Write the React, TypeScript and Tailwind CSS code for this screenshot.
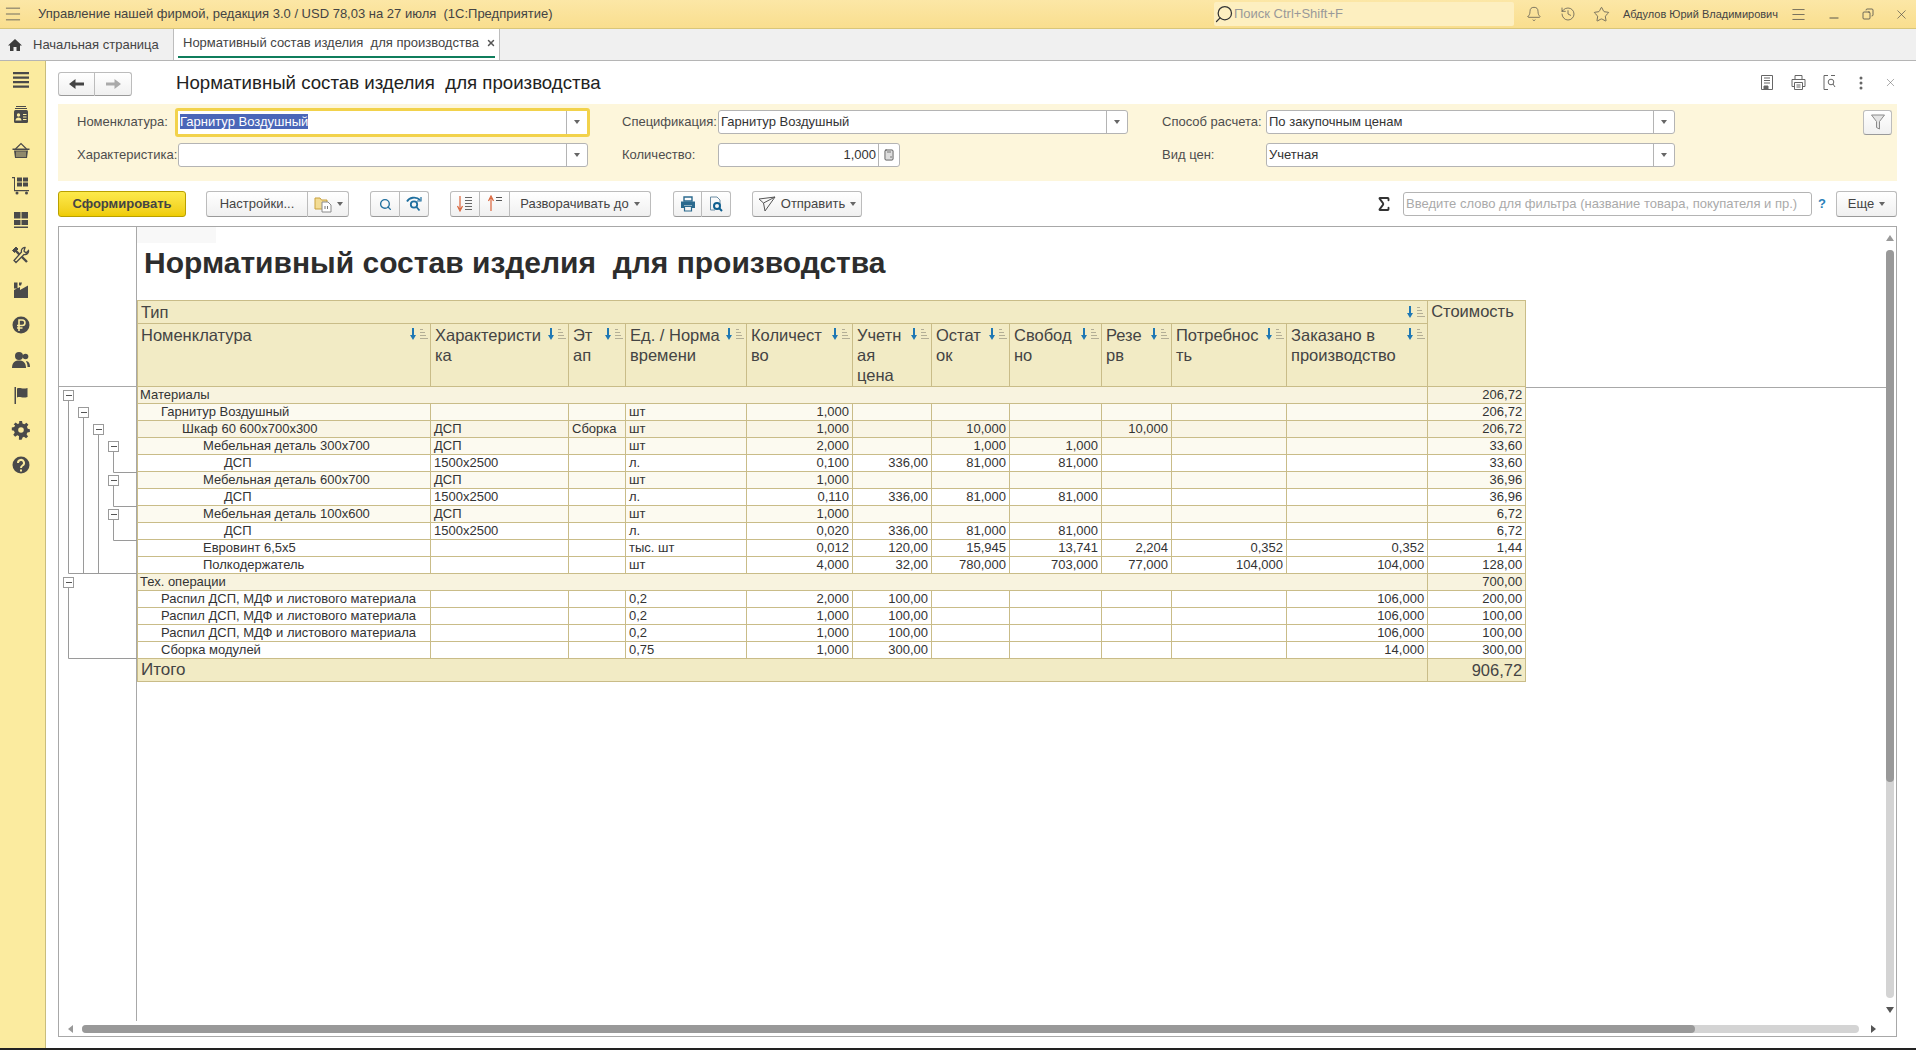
import React from "react";
import { Menu, X, Bell, History, Star, Search, Minus, Copy, Calculator, Sigma } from "lucide-react";

const FONT = "font-['Liberation_Sans',Arial,sans-serif]";
const DARK = "#4a4a4a";

const Caret = () => (
  <svg width="6" height="4" viewBox="0 0 6 4"><path d="M0 0h6L3 4z" fill="#666" /></svg>
);

const SortIcon = () => (
  <svg width="18" height="12" viewBox="0 0 18 12" className="shrink-0">
    <path d="M2 0h2v7h2l-3 5-3-5h2z" fill="#1f78b4" />
    <path d="M10 1.500h3M10 4.500h5M10 7.500h6M10 10.500h8" stroke="#b3ae96" strokeWidth="1" />
  </svg>
);

const SortDown = () => (
  <svg width="18" height="18" viewBox="0 0 18 18">
    <path d="M4 1v13M1.500 11 4 16l2.500-5" stroke="#d9633a" strokeWidth="1.200" fill="none" />
    <path d="M9 2.500h7M9 5.500h7M9 8.500h7M9 11.500h7M9 14.500h7" stroke="#666" strokeWidth="1" />
  </svg>
);

const SortUp = () => (
  <svg width="18" height="18" viewBox="0 0 18 18">
    <path d="M5 16V3M2.500 6 5 1l2.500 5" stroke="#d9633a" strokeWidth="1.200" fill="none" />
    <path d="M10 2.500h6M10 5.500h6" stroke="#555" strokeWidth="1" />
  </svg>
);

const FolderDoc = () => (
  <svg width="18" height="18" viewBox="0 0 18 18">
    <path d="M1 3h5l1.500 2H13v9H1z" fill="#f3dc94" stroke="#c9a13c" />
    <path d="M8 7h6l3 3v7H8z" fill="#fff" stroke="#8a8a8a" />
    <path d="M11 14v-3M13.500 14v-3" stroke="#777" />
  </svg>
);

const Refind = () => (
  <svg width="16" height="16" viewBox="0 0 16 16" fill="none" stroke="#1f6f9f" strokeWidth="1.800">
    <path d="M1 5.500C3 1.500 10 0 14 4" />
    <path d="M15 1v4h-4" strokeWidth="1.200" />
    <circle cx="8" cy="8.500" r="3.200" />
    <path d="m10.500 11 3 3.500" />
  </svg>
);

const PrintFilled = () => (
  <svg width="16" height="16" viewBox="0 0 16 16">
    <path d="M4 1h8v4H4z" fill="none" stroke="#2b6a8e" strokeWidth="1.400" />
    <path d="M1 5.500h14V12h-3V9.500H4V12H1z" fill="#2b6a8e" />
    <path d="M4.500 10.500h7V15h-7z" fill="none" stroke="#2b6a8e" strokeWidth="1.200" />
  </svg>
);

const DocSearch = () => (
  <svg width="16" height="16" viewBox="0 0 16 16">
    <path d="M2.500 1H9l3 3v5M2.500 1v13H7" fill="none" stroke="#6a8ca3" />
    <circle cx="9" cy="10" r="3" fill="none" stroke="#0f5f8f" strokeWidth="2" />
    <path d="m11 12 3 3" stroke="#0f5f8f" strokeWidth="2" />
  </svg>
);

const SendIcon = () => (
  <svg width="18" height="16" viewBox="0 0 18 16" fill="none" stroke="#555">
    <path d="M1 3 17 1 7 15 5.500 7z" />
    <path d="M5.500 7 17 1" />
  </svg>
);

const SaveIcon = () => (
  <svg width="16" height="17" viewBox="0 0 16 17" fill="none" stroke="#666">
    <path d="M2.500 1.500h11v14h-11z" />
    <path d="M5 4h6M5 6.500h6M5 9h6" />
    <path d="M5 12h4v3.500H5z" fill="#666" />
  </svg>
);

const PrintOutline = () => (
  <svg width="17" height="17" viewBox="0 0 17 17" fill="none" stroke="#666">
    <path d="M5 5V1.500h7V5M2 12.500V5.500h13v7h-2.500M4.500 12.500H2" />
    <path d="M4.500 8.500h8v7h-8zM6.500 11h4M6.500 13h4" />
  </svg>
);

const PreviewIcon = () => (
  <svg width="16" height="17" viewBox="0 0 16 17" fill="none" stroke="#666">
    <path d="M6 1.500H2v14h4M9 1.500h4" />
    <circle cx="9" cy="8" r="2.800" />
    <path d="m11 10 2 3" />
  </svg>
);

const Dots = () => (
  <svg width="16" height="16" viewBox="0 0 16 16" fill="#666">
    <circle cx="8" cy="3" r="1.500" /><circle cx="8" cy="8" r="1.500" /><circle cx="8" cy="13" r="1.500" />
  </svg>
);

const HomeIcon = () => (
  <svg width="14" height="14" viewBox="0 0 14 14" fill="#3d3d3d"><path d="M7 1 0 7.500h2V13h3.500V9h3v4H12V7.500h2z" /></svg>
);

const ArrowL = ({ c }: { c: string }) => (
  <svg width="16" height="12" viewBox="0 0 16 12" fill={c}><path d="M0 6 6.500 1v3.500H15v3H6.500V11z" /></svg>
);

const ArrowR = ({ c }: { c: string }) => (
  <svg width="16" height="12" viewBox="0 0 16 12" fill={c}><path d="M16 6 9.500 1v3.500H1v3h8.500V11z" /></svg>
);

const FunnelIcon = () => (
  <svg width="14" height="16" viewBox="0 0 14 16" fill="#e4e4e4" stroke="#8a8a8a"><path d="M.5 1h13L8.500 7.500V15l-3-1.500V7.500z" /></svg>
);

// sidebar section icons, all drawn solid in one colour
const sideIcons: React.ReactNode[] = [
  <g key="m"><path d="M2 2h16v2.200H2zM2 6.500h16v2.200H2zM2 11h16v2.200H2zM2 15.500h16v2.200H2z" /></g>,
  <g key="c">
    <path d="M5 1h10v1H5zM4 3h12v1H4z" />
    <rect x="3" y="5" width="14" height="13" rx="1.500" />
    <circle cx="7.500" cy="10" r="1.700" fill="#fbeb9f" />
    <path d="M4.500 15.500c0-4 6-4 6 0zM12 9h3.500v1H12zM12 11.500h3.500v1H12zM12 14h3.500v1H12z" fill="#fbeb9f" />
  </g>,
  <g key="b">
    <path d="M4.500 9 10 3.500 15.500 9" fill="none" stroke={DARK} strokeWidth="1.200" />
    <path d="M1.500 8.500h17V10h-17zM3 10.500h14l-1 7.500H4z" />
    <path d="M6 11.500V17M8 11.500V17M10 11.500V17M12 11.500V17M14 11.500V17" stroke="#fbeb9f" strokeWidth=".8" />
  </g>,
  <g key="k">
    <path d="M1 2h3v13h14v1.200H3V3.200H1z" />
    <path d="M6 2.500h5v4H6zM12 2.500h5v4h-5zM6 7.500h5v4H6zM12 7.500h5v4h-5z" />
    <circle cx="6" cy="18" r="1.500" /><circle cx="15.500" cy="18" r="1.500" />
  </g>,
  <g key="g"><path d="M3 2h6.500v6.500H3zM10.500 2H17v6.500h-6.500zM3 10h6.500v5H3zM10.500 10H17v5h-6.500zM3 16.500h14V18H3z" /></g>,
  <g key="t" fill="none" stroke={DARK}>
    <path d="m4 5 12 12" strokeWidth="2.400" />
    <path d="M1.500 5.500 5 2l2 2-3.500 3.500z" fill={DARK} strokeWidth="1" />
    <path d="M14 2.500a3.500 3.500 0 0 0-3.500 4.500L3 15.500 5 17.500l8-8a3.500 3.500 0 0 0 4.500-4L15 8l-2-2z" fill="#fbeb9f" strokeWidth="1.300" />
  </g>,
  <g key="f"><path d="M3 2.500h3.500v6H3zM8 2.500h3l-1 3H8zM3 18v-8l6-3v3l8-4.500V18z" /></g>,
  <g key="r">
    <circle cx="10" cy="10" r="8.500" />
    <path d="M8 16V5h3.200a2.700 2.700 0 0 1 0 5.500H6M6 13h5.500" fill="none" stroke="#fbeb9f" strokeWidth="1.600" />
  </g>,
  <g key="u">
    <circle cx="8" cy="6" r="4" /><path d="M1 18c0-6 3.500-7.500 7-7.500s7 1.500 7 7.500z" />
    <circle cx="14.500" cy="6.500" r="2.800" /><path d="M15.500 11c2.500.5 3.500 2.500 3.500 6h-2.500c0-2.500-.5-4.500-1.500-5.500z" />
  </g>,
  <g key="l"><path d="M3.500 2H5v17H3.500zM6 3.500c3-1.500 5 1 10.500-.5v9c-5.500 1.500-7.500-1-10.500.5z" /></g>,
  <g key="s">
    <path d="M8.500 1.500h3l.5 2.700 2 .9 2.300-1.600 2.100 2.100-1.600 2.300.9 2 2.300.6v3l-2.700.5-.9 2 1.600 2.300-2.100 2.100-2.300-1.600-2 .9-.5 2.300h-3" transform="scale(.92) translate(.5 -.5)" />
    <path d="M11.500 18.500h-3l-.5-2.700-2-.9-2.300 1.600-2.100-2.100 1.600-2.300-.9-2-2.300-.5v-3l2.700-.5.9-2L2 3.300l2.100-2.100 2.300 1.600 2-.9.5-2.300" transform="translate(.8 1.500) scale(.92)" />
    <circle cx="10" cy="10" r="6" /><circle cx="10" cy="10" r="2.800" fill="#fbeb9f" />
  </g>,
  <g key="q">
    <circle cx="10" cy="10" r="8.500" />
    <path d="M7 8a3 3 0 1 1 4.500 2.500c-1 .6-1.500 1-1.500 2.500" fill="none" stroke="#fbeb9f" strokeWidth="2" />
    <path d="M9 14.500h2v2H9z" fill="#fbeb9f" />
  </g>,
];

const Field = ({ value, w, focus, right, calc, selected }: { value?: string; w: string; focus?: boolean; right?: boolean; calc?: boolean; selected?: boolean }) => (
  <div className={`${w} ${focus ? "h-[29px] border-[3px] border-[#f2d24b]" : "h-[24px] border border-[#b4b4b4]"} flex items-center rounded-[3px] bg-white text-[13px] text-[#333]`}>
    <span className={`flex-1 px-[2px] truncate ${right ? "text-right" : ""}`}>
      {selected ? <span className="bg-[#4a66b8] text-white">{value}</span> : value}
    </span>
    <span className="h-full w-[21px] border-l border-[#b4b4b4] flex items-center justify-center text-[#555]">
      {calc ? <Calculator size={12} /> : <Caret />}
    </span>
  </div>
);

const Label = ({ children }: { children: React.ReactNode }) => (
  <div className="text-[13px] text-[#4d4d4d] whitespace-nowrap">{children}</div>
);

const Btn = ({ children, w, first, last }: { children: React.ReactNode; w: string; first?: boolean; last?: boolean }) => (
  <div className={`${w} h-[26px] flex items-center justify-center gap-[5px] border border-[#bcbcbc] border-b-[#9a9a9a] bg-gradient-to-b from-white to-[#f0f0f0] text-[13px] text-[#444] whitespace-nowrap ${first === false ? "border-l-0" : "rounded-l-[3px]"} ${last === false ? "" : "rounded-r-[3px]"}`}>
    {children}
  </div>
);

type Row = { kind: "g" | "s" | "l" | "w"; name: string; ind: number; c: string[] };

const rows: Row[] = [
  { kind: "g", name: "Материалы", ind: 0, c: [] },
  { kind: "l", name: "Гарнитур Воздушный", ind: 1, c: ["", "", "шт", "1,000", "", "", "", "", "", "", "206,72"] },
  { kind: "s", name: "Шкаф 60 600х700х300", ind: 2, c: ["ДСП", "Сборка", "шт", "1,000", "", "10,000", "", "10,000", "", "", "206,72"] },
  { kind: "l", name: "Мебельная деталь 300х700", ind: 3, c: ["ДСП", "", "шт", "2,000", "", "1,000", "1,000", "", "", "", "33,60"] },
  { kind: "w", name: "ДСП", ind: 4, c: ["1500х2500", "", "л.", "0,100", "336,00", "81,000", "81,000", "", "", "", "33,60"] },
  { kind: "l", name: "Мебельная деталь 600х700", ind: 3, c: ["ДСП", "", "шт", "1,000", "", "", "", "", "", "", "36,96"] },
  { kind: "w", name: "ДСП", ind: 4, c: ["1500х2500", "", "л.", "0,110", "336,00", "81,000", "81,000", "", "", "", "36,96"] },
  { kind: "l", name: "Мебельная деталь 100х600", ind: 3, c: ["ДСП", "", "шт", "1,000", "", "", "", "", "", "", "6,72"] },
  { kind: "w", name: "ДСП", ind: 4, c: ["1500х2500", "", "л.", "0,020", "336,00", "81,000", "81,000", "", "", "", "6,72"] },
  { kind: "w", name: "Евровинт 6,5х5", ind: 3, c: ["", "", "тыс. шт", "0,012", "120,00", "15,945", "13,741", "2,204", "0,352", "0,352", "1,44"] },
  { kind: "w", name: "Полкодержатель", ind: 3, c: ["", "", "шт", "4,000", "32,00", "780,000", "703,000", "77,000", "104,000", "104,000", "128,00"] },
  { kind: "g", name: "Тех. операции", ind: 0, c: [] },
  { kind: "w", name: "Распил ДСП, МДФ и листового материала", ind: 1, c: ["", "", "0,2", "2,000", "100,00", "", "", "", "", "106,000", "200,00"] },
  { kind: "w", name: "Распил ДСП, МДФ и листового материала", ind: 1, c: ["", "", "0,2", "1,000", "100,00", "", "", "", "", "106,000", "100,00"] },
  { kind: "w", name: "Распил ДСП, МДФ и листового материала", ind: 1, c: ["", "", "0,2", "1,000", "100,00", "", "", "", "", "106,000", "100,00"] },
  { kind: "w", name: "Сборка модулей", ind: 1, c: ["", "", "0,75", "1,000", "300,00", "", "", "", "", "14,000", "300,00"] },
];

const groupTotals: Record<string, string> = { "Материалы": "206,72", "Тех. операции": "700,00" };

const indents = ["pl-[2px]", "pl-[23px]", "pl-[44px]", "pl-[65px]", "pl-[86px]"];
const bgs = { g: "bg-[#f8f3df]", s: "bg-[#f9f5e5]", l: "bg-[#fcfaf0]", w: "bg-white" };
const cols = [293, 138, 57, 121, 106, 79, 78, 92, 70, 115, 141, 98];
const heads: [string, string?, string?][] = [
  ["Номенклатура"], ["Характеристи", "ка"], ["Эт", "ап"], ["Ед. / Норма", "времени"], ["Количест", "во"], ["Учетн", "ая", "цена"], ["Остат", "ок"], ["Свобод", "но"], ["Резе", "рв"], ["Потребнос", "ть"], ["Заказано в", "производство"],
];

const cell = "border border-[#c9bc88]";

// tree outline in the left gutter
const Outline = () => {
  const top = 387;
  const ry = (n: number) => top + n * 17 + 8.500;
  const boxes = [[68, 0], [83, 1], [98, 2], [113, 3], [113, 5], [113, 7], [68, 11]];
  return (
    <svg width="78" height="272" viewBox={`59 ${top} 78 272`} className="block">
      <g stroke="#9a9a9a" fill="none">
        <path d={`M68.500 ${ry(0)}V573.500H137`} />
        <path d={`M83.500 ${ry(1)}V573`} />
        <path d={`M98.500 ${ry(2)}V573`} />
        <path d={`M113.500 ${ry(3)}V472.500H137`} />
        <path d={`M113.500 ${ry(5)}V506.500H137`} />
        <path d={`M113.500 ${ry(7)}V540.500H137`} />
        <path d={`M68.500 ${ry(11)}V658.500H137`} />
      </g>
      {boxes.map(([x, n]) => (
        <g key={`${x}-${n}`}>
          <rect x={x - 4.500} y={ry(n) - 5} width="10" height="10" fill="#fff" stroke="#9a9a9a" />
          <path d={`M${x - 2} ${ry(n)}h6`} stroke="#555" />
        </g>
      ))}
    </svg>
  );
};

export default function App() {
  return (
    <div className={`${FONT} w-[1916px] h-[1050px] overflow-hidden flex flex-col bg-white text-[#333]`}>
      {/* top bar */}
      <div className="h-[29px] shrink-0 flex items-center bg-gradient-to-b from-[#fce7a6] to-[#f9de8e] border-b border-[#d8c67a] text-[13px] text-[#444]">
        <Menu size={20} strokeWidth={1} className="ml-[3px] mr-[15px] text-[#555]" />
        <span className="whitespace-pre">Управление нашей фирмой, редакция 3.0 / USD 78,03 на 27 июля  (1С:Предприятие)</span>
        <div className="ml-auto w-[300px] h-[24px] bg-[#fdefc0] rounded-[2px] flex items-center text-[#999]">
          <Search size={20} strokeWidth={1.500} className="text-[#333] -scale-x-100" />
          <span>Поиск Ctrl+Shift+F</span>
        </div>
        <Bell size={16} strokeWidth={1} className="ml-[12px]" />
        <History size={16} strokeWidth={1} className="ml-[18px]" />
        <Star size={17} strokeWidth={1} className="ml-[17px]" />
        <span className="ml-[13px] text-[11px] whitespace-nowrap">Абдулов Юрий Владимирович</span>
        <Menu size={17} strokeWidth={1} className="ml-[12px]" />
        <Minus size={14} strokeWidth={1.500} className="ml-[20px] mt-[8px]" />
        <Copy size={12} strokeWidth={1.500} className="ml-[21px] -scale-x-100" />
        <X size={15} strokeWidth={1} className="ml-[20px] mr-[7px]" />
      </div>

      {/* tabs */}
      <div className="h-[32px] shrink-0 flex bg-[#f0f0f0] border-b border-[#b5b5b5] text-[13px] text-[#444]">
        <div className="w-[173px] flex items-center">
          <span className="ml-[8px] mr-[11px]"><HomeIcon /></span>
          <span>Начальная страница</span>
        </div>
        <div className="w-[327px] bg-white border-x border-[#bdbdbd] flex flex-col">
          <div className="flex-1 flex items-center pl-[9px]">
            <span className="whitespace-pre">Нормативный состав изделия  для производства</span>
            <X size={10} strokeWidth={3.500} className="ml-[7px] text-[#555]" />
          </div>
          <div className="h-[2px] bg-[#0f7d5c] mx-[4px] mb-[2px]" />
        </div>
      </div>

      <div className="flex-1 min-h-0 flex">
        {/* sidebar */}
        <div className="w-[46px] shrink-0 bg-[#fbeb9f] border-r border-[#c9bd7d] flex flex-col items-center pt-[9px] gap-[15px] pr-[4px]">
          {sideIcons.map((icon, i) => (
            <svg key={i} width="20" height="20" viewBox="0 0 20 20" fill={DARK}>{icon}</svg>
          ))}
        </div>

        {/* main */}
        <div className="flex-1 min-w-0 flex flex-col pl-[12px] pr-[19px]">
          {/* title row */}
          <div className="h-[43px] shrink-0 flex items-center">
            <div className="flex mt-[2px]">
              <div className="w-[37px] h-[24px] flex items-center justify-center border border-[#bcbcbc] border-b-[#9a9a9a] rounded-l-[3px] bg-gradient-to-b from-white to-[#f0f0f0]"><ArrowL c="#444" /></div>
              <div className="w-[37px] h-[24px] flex items-center justify-center border border-l-0 border-[#bcbcbc] border-b-[#9a9a9a] rounded-r-[3px] bg-gradient-to-b from-white to-[#f0f0f0]"><ArrowR c="#aaa" /></div>
            </div>
            <h1 className="ml-[44px] text-[18.670px] text-[#222] whitespace-pre font-normal">Нормативный состав изделия  для производства</h1>
            <div className="ml-auto flex items-center gap-[15px]">
              <SaveIcon />
              <PrintOutline />
              <PreviewIcon />
              <Dots />
              <X size={13} strokeWidth={1} className="text-[#666]" />
            </div>
          </div>

          {/* filter panel */}
          <div className="h-[77px] shrink-0 bg-[#fdf6db] pl-[19px] pt-[2px] grid grid-cols-[98px_415px_32px_96px_410px_34px_104px_409px_188px_29px] grid-rows-[32px_34px] items-center">
            <Label>Номенклатура:</Label>
            <Field value="Гарнитур Воздушный" w="w-[415px]" focus selected />
            <div />
            <Label>Спецификация:</Label>
            <Field value="Гарнитур Воздушный" w="w-[410px]" />
            <div />
            <Label>Способ расчета:</Label>
            <Field value="По закупочным ценам" w="w-[409px]" />
            <div />
            <div className="w-[29px] h-[25px] flex items-center justify-center border border-[#bcbcbc] border-b-[#9a9a9a] rounded-[3px] bg-gradient-to-b from-white to-[#f0f0f0]"><FunnelIcon /></div>
            <Label>Характеристика:</Label>
            <Field w="w-[410px] ml-[3px]" />
            <div />
            <Label>Количество:</Label>
            <Field value="1,000" w="w-[182px]" right calc />
            <div />
            <Label>Вид цен:</Label>
            <Field value="Учетная" w="w-[409px]" />
          </div>

          {/* toolbar */}
          <div className="h-[45px] shrink-0 flex items-center pt-[1px]">
            <div className="w-[128px] h-[26px] flex items-center justify-center rounded-[3px] border border-[#b9a000] bg-gradient-to-b from-[#fdea4a] to-[#efcc00] text-[13px] font-bold text-[#444]">Сформировать</div>
            <div className="ml-[20px] flex">
              <Btn w="w-[102px]" last={false}>Настройки...</Btn>
              <Btn w="w-[41px]" first={false}><FolderDoc /><Caret /></Btn>
            </div>
            <div className="ml-[21px] flex">
              <Btn w="w-[30px]" last={false}><Search size={13} strokeWidth={2.500} className="text-[#1f6f9f]" /></Btn>
              <Btn w="w-[29px]" first={false}><Refind /></Btn>
            </div>
            <div className="ml-[21px] flex">
              <Btn w="w-[30px]" last={false}><SortDown /></Btn>
              <Btn w="w-[30px]" first={false} last={false}><SortUp /></Btn>
              <Btn w="w-[141px]" first={false}>Разворачивать до <Caret /></Btn>
            </div>
            <div className="ml-[22px] flex">
              <Btn w="w-[29px]" last={false}><PrintFilled /></Btn>
              <Btn w="w-[29px]" first={false}><DocSearch /></Btn>
            </div>
            <div className="ml-[21px] flex">
              <Btn w="w-[110px]"><SendIcon /> Отправить <Caret /></Btn>
            </div>
            <Sigma size={18} strokeWidth={2.500} className="ml-auto text-[#333]" />
            <div className="ml-[10px] w-[409px] h-[24px] border border-[#b4b4b4] rounded-[3px] flex items-center px-[2px] text-[13px] text-[#aaa] whitespace-nowrap overflow-hidden">Введите слово для фильтра (название товара, покупателя и пр.)</div>
            <span className="ml-[6px] text-[13px] font-bold text-[#2b7fb8]">?</span>
            <div className="ml-[10px]"><Btn w="w-[61px]">Еще <Caret /></Btn></div>
          </div>

          {/* report */}
          <div className="relative h-[811px] shrink-0 border border-[#a8a8a8] flex overflow-hidden">
            <div className="w-[78px] h-[794px] shrink-0 border-r border-[#a8a8a8] flex flex-col">
              <div className="h-[160px] shrink-0 border-b border-[#a8a8a8]" />
              <Outline />
            </div>
            <div className="flex-1 min-w-0">
              <div className="h-[16px] w-[79px] bg-[#f8f8f8]" />
              <div className="h-[57px] flex items-start pl-[7px] text-[30px] leading-[32px] font-bold text-[#2d2d2d] whitespace-pre pt-[4px]">Нормативный состав изделия  для производства</div>
              <table className="table-fixed border-collapse w-[1388px]">
                <colgroup>
                  {cols.map((w, i) => <col key={i} style={{ width: w }} />)}
                </colgroup>
                <tbody>
                  <tr className="h-[23px] bg-[#f2ebc5] text-[16.500px] leading-[17px] text-[#444]">
                    <td colSpan={11} className={`${cell} px-[3px]`}>
                      <div className="flex justify-between items-center"><span>Тип</span><div className="-mr-[1px]"><SortIcon /></div></div>
                    </td>
                    <td rowSpan={2} className={`${cell} align-top px-[3px] pt-[2px] whitespace-nowrap`}>Стоимость</td>
                  </tr>
                  <tr className="h-[63px] bg-[#f2ebc5] text-[16.500px] leading-[20px] text-[#444]">
                    {heads.map((h, i) => (
                      <td key={i} className={`${cell} align-top ${i === 0 ? "pl-[3px]" : "pl-[4px]"} pr-[2px] pt-[1px]`}>
                        <div className="flex justify-between">
                          <div className="whitespace-nowrap">{h[0]}{h[1] && <br />}{h[1]}{h[2] && <br />}{h[2]}</div>
                          <div className="mt-[3px]"><SortIcon /></div>
                        </div>
                      </td>
                    ))}
                  </tr>
                  {rows.map((r, i) =>
                    r.kind === "g" ? (
                      <tr key={i} className={`h-[17px] text-[13px] leading-[14px] text-[#333] ${bgs.g}`}>
                        <td colSpan={11} className={`${cell} pl-[2px]`}>{r.name}</td>
                        <td className={`${cell} text-right pr-[3px]`}>{groupTotals[r.name]}</td>
                      </tr>
                    ) : (
                      <tr key={i} className={`h-[17px] text-[13px] leading-[14px] text-[#333] ${bgs[r.kind]}`}>
                        <td className={`${cell} whitespace-nowrap ${indents[r.ind]}`}>{r.name}</td>
                        {r.c.map((v, j) => (
                          <td key={j} className={`${cell} whitespace-nowrap overflow-hidden ${j < 3 ? "pl-[3px]" : "text-right pr-[3px]"}`}>{v}</td>
                        ))}
                      </tr>
                    )
                  )}
                  <tr className="h-[23px] bg-[#f2ebc5] text-[#444]">
                    <td colSpan={11} className={`${cell} px-[3px] text-[17px] leading-[20px]`}>Итого</td>
                    <td className={`${cell} text-right pr-[3px] text-[16.500px] leading-[20px]`}>906,72</td>
                  </tr>
                </tbody>
              </table>
            </div>

            {/* header line to the right of the table */}
            <div className="absolute left-[1467px] top-[160px] w-[360px] h-px bg-[#a8a8a8]" />

            {/* scrollbars */}
            <svg width="8" height="6" viewBox="0 0 8 6" className="absolute right-[2px] top-[8px]"><path d="M4 0l4 6H0z" fill="#999" /></svg>
            <div className="absolute right-[2px] top-[23px] w-[8px] h-[748px] rounded-full bg-[#d4d4d4]">
              <div className="w-full h-[532px] rounded-full bg-[#999]" />
            </div>
            <svg width="8" height="6" viewBox="0 0 8 6" className="absolute right-[2px] bottom-[23px]"><path d="M0 0h8L4 6z" fill="#555" /></svg>
            <svg width="5" height="8" viewBox="0 0 5 8" className="absolute left-[9px] bottom-[3px]"><path d="M5 0v8L0 4z" fill="#999" /></svg>
            <div className="absolute left-[23px] bottom-[3px] w-[1777px] h-[8px] rounded-full bg-[#d4d4d4]">
              <div className="w-[1613px] h-full rounded-full bg-[#999]" />
            </div>
            <svg width="5" height="8" viewBox="0 0 5 8" className="absolute right-[20px] bottom-[3px]"><path d="M0 0v8l5-4z" fill="#555" /></svg>
          </div>
          <div className="flex-1" />
        </div>
      </div>
      <div className="h-[2px] shrink-0 bg-[#222]" />
    </div>
  );
}
